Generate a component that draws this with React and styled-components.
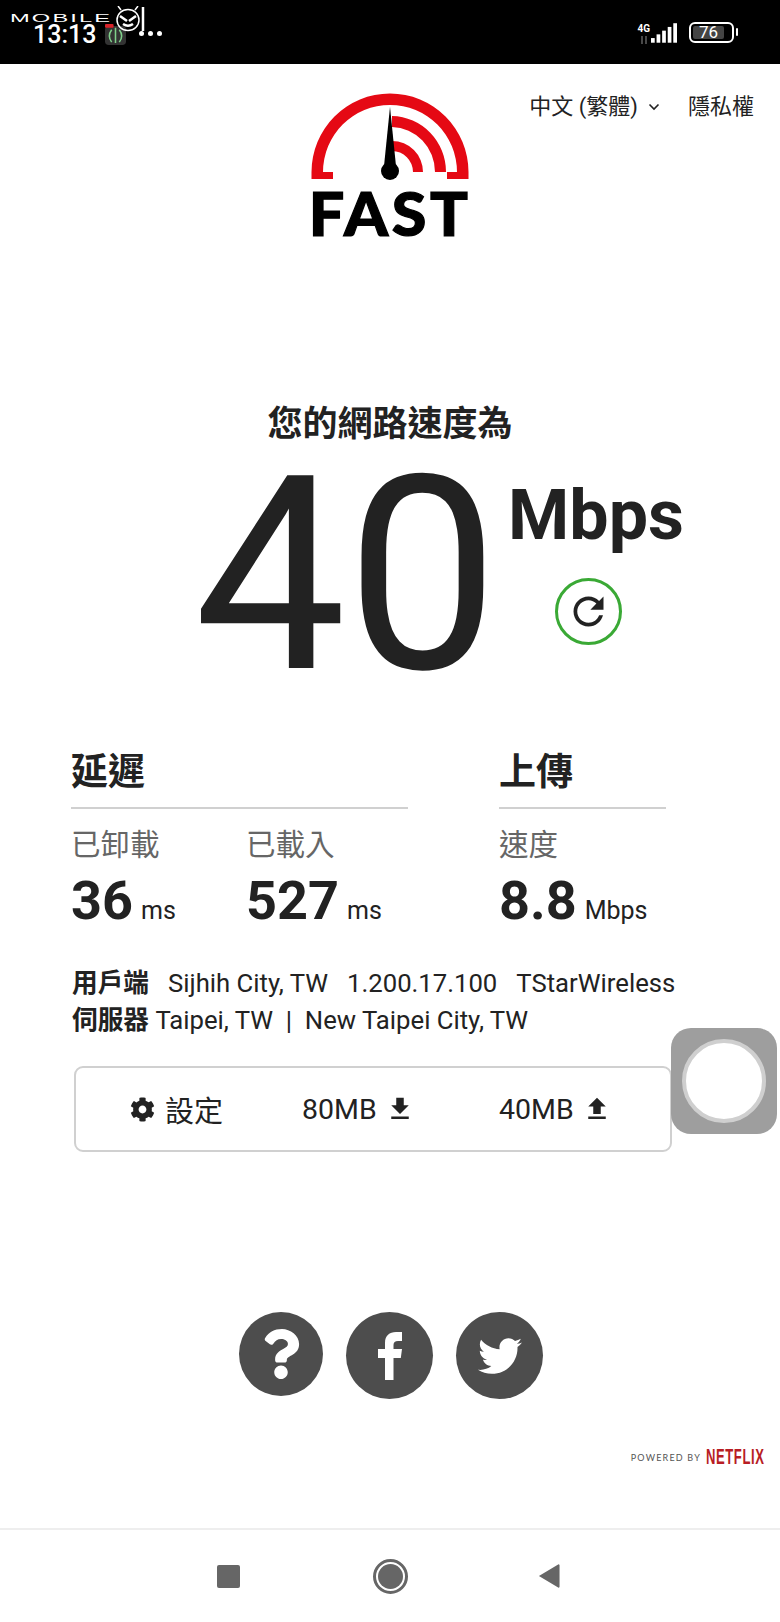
import React from "react";
import styled, { createGlobalStyle } from "styled-components";
import { FaCog, FaQuestion, FaTwitter } from "react-icons/fa";
import { MdFileDownload, MdFileUpload } from "react-icons/md";

const GlobalStyle = createGlobalStyle`
  html, body { margin: 0; padding: 0; background: #fff; }
  body { font-family: Roboto, "Noto Sans CJK TC", sans-serif; color: #222; }
`;

const App = () => {
  return (
    <Page>
      <GlobalStyle />
      <StatusBar>
        <Clock>13:13</Clock>
        <AppIcon viewBox="0 0 24 22">
          <rect x="1" y="2" width="22" height="20" rx="4" fill="#333" />
          <path d="M12 4v16M8 6c-3 4-3 9 0 13M16 6c3 4 3 9 0 13" stroke="#7fd08a" strokeWidth="1.6" fill="none" />
          <rect x="1" y="0" width="9" height="4" rx="1" fill="#d8232a" />
        </AppIcon>
        <Dots>
          <i /><i /><i />
        </Dots>
        <StatusRight>
          <Network>
            <small>4G</small>
            <svg width="10" height="10" viewBox="0 0 10 10">
              <path d="M3 1v8M7 1v8" stroke="#777" strokeWidth="1.2" />
            </svg>
          </Network>
          <Signal viewBox="0 0 28 22">
            <rect x="0" y="17" width="4" height="5" />
            <rect x="6" y="13" width="4" height="9" />
            <rect x="12" y="9" width="4" height="13" />
            <rect x="18" y="5" width="4" height="17" />
            <rect x="24" y="1" width="4" height="21" />
          </Signal>
          <Battery>
            <span>76</span>
          </Battery>
        </StatusRight>
      </StatusBar>

      <Watermark>
        <span>MOBILE</span>
        <svg width="30" height="26" viewBox="0 0 30 26" fill="none" stroke="#fff" strokeWidth="1.5">
          <ellipse cx="13" cy="14" rx="11" ry="10.5" />
          <path d="M6 4L3 0M20 4L23 0" />
          <path d="M5 10l7 5M21 10l-7 5M8 18c3 2 7 2 10 0" strokeWidth="2.5" />
          <path d="M28 1v24" strokeWidth="2.5" />
        </svg>
      </Watermark>

      <Header>
        <span />
        <Logo>
          <svg width="160" height="90" viewBox="310 92 160 90">
            <path
              fill="#e50914"
              d="M311.5 179V172A78.5 78.5 0 0 1 468.5 172V179H447V172H457A67 67 0 0 0 323 172H333V179Z"
            />
            <path fill="#e50914" d="M392 116A55 56 0 0 1 446 172H435A44 45 0 0 0 392 127Z" />
            <path fill="#e50914" d="M392 141A31 31 0 0 1 423 172H413A21 21 0 0 0 392 151Z" />
            <path fill="#000" d="M390 107L396 166H384Z" />
            <circle cx="390" cy="171" r="9" fill="#000" />
          </svg>
          <LogoWord>FAST</LogoWord>
        </Logo>
        <Nav>
          <LangSelect>
            中文 (繁體)
            <svg width="12" height="8" viewBox="0 0 12 8" fill="none" stroke="#222" strokeWidth="1.6">
              <path d="M1.5 1.5L6 6l4.5-4.5" />
            </svg>
          </LangSelect>
          <span>隱私權</span>
        </Nav>
      </Header>

      <SpeedTitle>您的網路速度為</SpeedTitle>
      <SpeedRow>
        <SpeedValue>40</SpeedValue>
        <SpeedSide>
          <SpeedUnit>Mbps</SpeedUnit>
          <Retry>
            <svg width="45" height="45" viewBox="0 0 24 24" fill="#222">
              <path d="M17.65 6.35C16.2 4.9 14.21 4 12 4c-4.42 0-7.99 3.58-7.99 8s3.57 8 7.99 8c3.73 0 6.84-2.55 7.73-6h-2.08c-.82 2.33-3.04 4-5.65 4-3.31 0-6-2.69-6-6s2.69-6 6-6c1.66 0 3.14.69 4.22 1.78L13 11h7V4l-2.35 2.35z" />
            </svg>
          </Retry>
        </SpeedSide>
      </SpeedRow>

      <Results>
        <ResultGroup $width={337}>
          <GroupTitle>延遲</GroupTitle>
          <Metrics>
            <Metric $width={175}>
              <MetricLabel>已卸載</MetricLabel>
              <MetricValue>36<small>ms</small></MetricValue>
            </Metric>
            <Metric>
              <MetricLabel>已載入</MetricLabel>
              <MetricValue>527<small>ms</small></MetricValue>
            </Metric>
          </Metrics>
        </ResultGroup>
        <ResultGroup $width={167}>
          <GroupTitle>上傳</GroupTitle>
          <Metrics>
            <Metric>
              <MetricLabel>速度</MetricLabel>
              <MetricValue>8.8<small>Mbps</small></MetricValue>
            </Metric>
          </Metrics>
        </ResultGroup>
      </Results>

      <Info>
        <InfoLine>
          <b>用戶端</b>
          <InfoItem>Sijhih City, TW</InfoItem>
          <InfoItem>1.200.17.100</InfoItem>
          <InfoItem>TStarWireless</InfoItem>
        </InfoLine>
        <InfoLine>
          <b>伺服器</b> Taipei, TW&nbsp; |&nbsp; New Taipei City, TW
        </InfoLine>
      </Info>

      <SettingsBar>
        <SettingsItem $left={54} $width={172}>
          <FaCog size={25} />
          <SettingsLabel>設定</SettingsLabel>
        </SettingsItem>
        <SettingsItem $width={197}>
          80MB <MdFileDownload size={30} />
        </SettingsItem>
        <SettingsItem>
          40MB <MdFileUpload size={30} />
        </SettingsItem>
      </SettingsBar>

      <AssistiveTouch>
        <i />
      </AssistiveTouch>

      <Social>
        <SocialButton $size={84}><FaQuestion size={50} /></SocialButton>
        <SocialButton $size={87}>
          <svg width="24" height="48" viewBox="0 0 24 48" fill="#fff">
            <path d="M7 48V26H0V17h7V11C7 3.5 11.5 0 18 0h6v9h-4c-3 0-4.5 1.2-4.5 4v4H24l-1.2 9h-7.3v22z" />
          </svg>
        </SocialButton>
        <SocialButton $size={87}><FaTwitter size={44} /></SocialButton>
      </Social>

      <Powered>
        <span>POWERED BY</span>
        <NetflixWord>NETFLIX</NetflixWord>
      </Powered>

      <NavBar>
        <NavSquare />
        <NavHome><i /></NavHome>
        <NavBack viewBox="0 0 24 26" preserveAspectRatio="none">
          <path d="M1 13L22 1.5a1 1 0 0 1 1.5 1v21a1 1 0 0 1-1.5 1Z" />
        </NavBack>
      </NavBar>
    </Page>
  );
};

export default App;

const Page = styled.div`
  position: relative;
  width: 780px;
  height: 1622px;
  overflow: hidden;
  display: flex;
  flex-direction: column;
  background: #fff;
`;

const StatusBar = styled.div`
  flex: none;
  height: 64px;
  background: #000;
  display: flex;
  align-items: center;
  padding: 0 46px 0 33px;
  box-sizing: border-box;
  color: #fff;
`;
const Clock = styled.div`
  font-size: 25px;
  line-height: 20px;
  font-weight: 500;
  margin-top: 6px;
  width: 71px;
`;
const AppIcon = styled.svg`
  width: 23px;
  height: 21px;
  margin-top: 5px;
`;
const Dots = styled.div`
  display: flex;
  gap: 4px;
  margin-left: 12px;
  margin-top: 3px;
  i {
    width: 5px;
    height: 5px;
    border-radius: 50%;
    background: #fff;
  }
`;
const StatusRight = styled.div`
  margin-left: auto;
  display: flex;
  align-items: center;
`;
const Network = styled.div`
  display: flex;
  flex-direction: column;
  align-items: center;
  margin: 4px 1px 0 0;
  small {
    font-size: 10px;
    font-weight: 700;
    line-height: 12px;
  }
`;
const Signal = styled.svg`
  width: 26px;
  height: 21px;
  fill: #fff;
  margin-right: 12px;
`;
const Battery = styled.div`
  position: relative;
  width: 45px;
  height: 21px;
  border: 2px solid #fff;
  border-radius: 6px;
  box-sizing: border-box;
  padding: 2px;
  display: flex;
  span {
    width: 31px;
    background: #444;
    border-radius: 2px;
    font-size: 17px;
    line-height: 13px;
    text-align: center;
  }
  &::after {
    content: "";
    position: absolute;
    right: -6px;
    top: 4px;
    width: 2px;
    height: 8px;
    background: #fff;
    border-radius: 1px;
  }
`;

const Watermark = styled.div`
  position: absolute;
  left: 10px;
  top: 5px;
  display: flex;
  align-items: flex-start;
  color: #fff;
  span {
    font-family: "Liberation Sans", sans-serif;
    font-size: 11px;
    letter-spacing: 1px;
    line-height: 10px;
    margin-top: 8px;
    transform: scaleX(2.15);
    transform-origin: left;
    width: 105px;
  }
  svg {
    margin-top: 1px;
  }
`;

const Header = styled.div`
  flex: none;
  display: grid;
  grid-template-columns: 1fr auto 1fr;
  padding-top: 28px;
`;
const Logo = styled.div`
  display: flex;
  flex-direction: column;
  align-items: center;
  svg {
    display: block;
  }
`;
const LogoWord = styled.div`
  font-family: Lato, sans-serif;
  font-weight: 900;
  font-size: 61px;
  line-height: 62px;
  letter-spacing: 3.5px;
  color: #000;
  -webkit-text-stroke: 1.2px #000;
  transform: scaleX(1.03);
`;
const Nav = styled.div`
  justify-self: end;
  align-self: start;
  display: flex;
  gap: 28px;
  font-size: 22px;
  line-height: 26px;
  padding: 0 26px 0 0;
  white-space: nowrap;
  margin-top: 2px;
`;
const LangSelect = styled.span`
  display: flex;
  align-items: center;
  gap: 10px;
`;

const SpeedTitle = styled.div`
  flex: none;
  margin-top: 156px;
  text-align: center;
  font-size: 35px;
  line-height: 50px;
  font-weight: 700;
`;
const SpeedRow = styled.div`
  flex: none;
  display: flex;
  margin-top: -12px;
  padding-left: 194px;
`;
const SpeedValue = styled.div`
  width: 315px;
  font-size: 271px;
  line-height: 276px;
  font-weight: 400;
  color: #222;
`;
const SpeedSide = styled.div`
  width: 174px;
  display: flex;
  flex-direction: column;
  align-items: center;
`;
const SpeedUnit = styled.div`
  font-size: 70px;
  line-height: 70px;
  font-weight: 700;
  margin-top: 42px;
`;
const Retry = styled.div`
  width: 67px;
  height: 67px;
  margin: 28px 16px 0 0;
  border: 3px solid #3aa935;
  border-radius: 50%;
  box-sizing: border-box;
  display: flex;
  align-items: center;
  justify-content: center;
`;

const Results = styled.div`
  flex: none;
  display: flex;
  gap: 91px;
  padding-left: 71px;
  margin-top: 32px;
`;
const ResultGroup = styled.div`
  width: ${(p) => p.$width}px;
`;
const GroupTitle = styled.div`
  font-size: 37px;
  line-height: 48px;
  font-weight: 700;
  height: 58px;
  padding-top: 3px;
  border-bottom: 2px solid #d0d0d0;
`;
const Metrics = styled.div`
  display: flex;
  padding-top: 18px;
`;
const Metric = styled.div`
  width: ${(p) => (p.$width ? `${p.$width}px` : "auto")};
`;
const MetricLabel = styled.div`
  font-size: 29.5px;
  line-height: 36px;
  color: #666;
`;
const MetricValue = styled.div`
  font-size: 54px;
  line-height: 62px;
  font-weight: 700;
  margin-top: 7px;
  white-space: nowrap;
  small {
    font-size: 25px;
    font-weight: 400;
    margin-left: 8px;
  }
`;

const Info = styled.div`
  flex: none;
  padding-left: 72px;
  margin-top: 23px;
  font-size: 25.7px;
  line-height: 37px;
`;
const InfoLine = styled.div`
  white-space: nowrap;
  b {
    font-weight: 700;
  }
`;
const InfoItem = styled.span`
  margin-left: 19px;
`;

const SettingsBar = styled.div`
  flex: none;
  margin: 27px 0 0 74px;
  width: 598px;
  height: 86px;
  box-sizing: border-box;
  border: 2px solid #d0d0d0;
  border-radius: 9px;
  display: flex;
  align-items: center;
  font-size: 28.5px;
`;
const SettingsItem = styled.div`
  display: flex;
  align-items: center;
  gap: 8px;
  margin-left: ${(p) => p.$left || 0}px;
  width: ${(p) => (p.$width ? `${p.$width}px` : "auto")};
`;
const SettingsLabel = styled.span`
  font-size: 29px;
  margin-left: 2px;
`;

const AssistiveTouch = styled.div`
  position: absolute;
  left: 671px;
  top: 1028px;
  width: 106px;
  height: 106px;
  border-radius: 20px;
  background: #9e9e9e;
  display: flex;
  align-items: center;
  justify-content: center;
  i {
    width: 84px;
    height: 84px;
    border-radius: 50%;
    background: #fff;
    border: 4px solid #cfcfcf;
    box-sizing: border-box;
  }
`;

const Social = styled.div`
  flex: none;
  display: flex;
  justify-content: center;
  align-items: flex-start;
  gap: 23px;
  margin-top: 160px;
  padding-left: 2px;
`;
const SocialButton = styled.div`
  width: ${(p) => p.$size}px;
  height: ${(p) => p.$size}px;
  border-radius: 50%;
  background: #4d4d4d;
  color: #fff;
  display: flex;
  align-items: center;
  justify-content: center;
`;

const Powered = styled.div`
  flex: none;
  display: flex;
  justify-content: flex-end;
  align-items: center;
  gap: 5px;
  padding-right: 15px;
  margin-top: 48px;
  span {
    font-family: Lato, sans-serif;
    font-size: 9px;
    letter-spacing: 1.2px;
    color: #555;
  }
`;
const NetflixWord = styled.b`
  display: inline-block;
  font-family: "Liberation Sans", sans-serif;
  font-size: 22.5px;
  line-height: 20px;
  color: #b81d24;
  width: 59px;
  transform: scaleX(0.58);
  transform-origin: left;
  white-space: nowrap;
  letter-spacing: 1px;
`;

const NavBar = styled.div`
  position: absolute;
  left: 0;
  right: 0;
  bottom: 0;
  height: 94px;
  border-top: 2px solid #eee;
  box-sizing: border-box;
  display: grid;
  grid-template-columns: 217px 23px 133px 35px 130px 22px;
  align-items: center;
`;
const NavSquare = styled.i`
  grid-column: 2;
  width: 23px;
  height: 23px;
  border-radius: 2px;
  background: #666;
`;
const NavHome = styled.div`
  grid-column: 4;
  width: 35px;
  height: 35px;
  border: 3px solid #666;
  border-radius: 50%;
  box-sizing: border-box;
  display: flex;
  align-items: center;
  justify-content: center;
  i {
    width: 25px;
    height: 25px;
    border-radius: 50%;
    background: #666;
  }
`;
const NavBack = styled.svg`
  grid-column: 6;
  width: 22px;
  height: 26px;
  fill: #666;
`;
